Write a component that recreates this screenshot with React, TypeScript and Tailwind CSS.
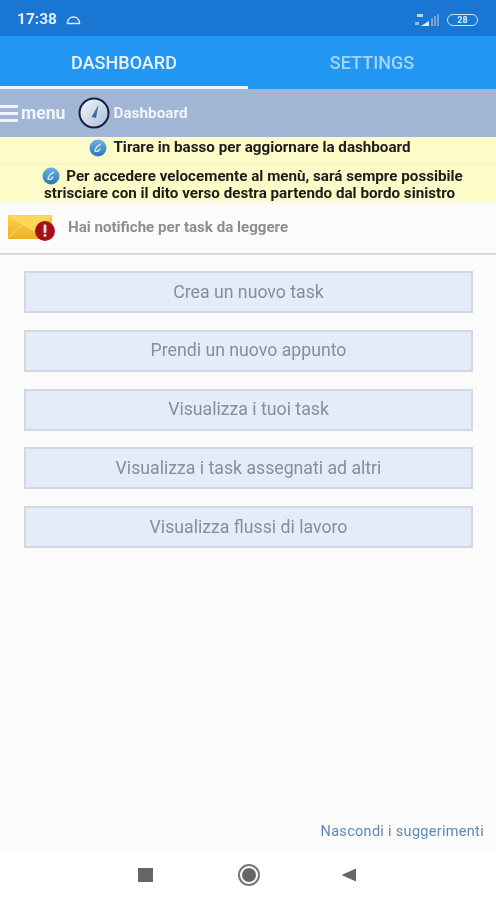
const font = { fontFamily: '"Roboto", "Liberation Sans", sans-serif' };

function InfoIcon() {
  return (
    <svg width="18" height="18" viewBox="0 0 18 18" className="shrink-0">
      <defs>
        <linearGradient id="ig" x1="0" y1="0" x2="0" y2="1">
          <stop offset="0" stopColor="#6fb2e6" />
          <stop offset="1" stopColor="#2a78b8" />
        </linearGradient>
      </defs>
      <circle cx="9" cy="9" r="8.5" fill="url(#ig)" />
      <path d="M11.5 5.5 C9 6.5 6.5 9 6 12 C8 13 10 11.5 11 10" fill="none" stroke="#cfe4f5" strokeWidth="1.4" strokeLinecap="round" />
    </svg>
  );
}

function Gauge() {
  return (
    <svg width="32" height="32" viewBox="0 0 32 32" className="shrink-0">
      <defs>
        <linearGradient id="gg" x1="0" y1="0" x2="1" y2="1">
          <stop offset="0" stopColor="#f7f8fb" />
          <stop offset="1" stopColor="#a9bdd9" />
        </linearGradient>
      </defs>
      <circle cx="16" cy="16" r="14.5" fill="url(#gg)" stroke="#141d44" strokeWidth="2" />
      <path d="M20.5 8 L18 21 L13.5 20 Z" fill="#3f6fa8" />
    </svg>
  );
}

function Mail() {
  return (
    <svg width="48" height="28" viewBox="0 0 48 28" className="shrink-0">
      <defs>
        <linearGradient id="ml" x1="0" y1="0" x2="0" y2="1">
          <stop offset="0" stopColor="#fbd24c" />
          <stop offset="1" stopColor="#eeb022" />
        </linearGradient>
      </defs>
      <rect x="0" y="1" width="44" height="24" rx="1" fill="url(#ml)" />
      <path d="M0 2 L25 17 L44 2 Z" fill="#fbd85c" />
      <path d="M1 23 L14 11" stroke="#fde28a" strokeWidth="1" />
      <circle cx="37" cy="17" r="10" fill="#a80f14" />
      <rect x="35.6" y="10.5" width="2.8" height="8.5" rx="1" fill="#f4e3e3" />
      <rect x="35.6" y="20" width="2.8" height="2.8" rx="1" fill="#f4e3e3" />
    </svg>
  );
}

const buttons = [
  "Crea un nuovo task",
  "Prendi un nuovo appunto",
  "Visualizza i tuoi task",
  "Visualizza i task assegnati ad altri",
  "Visualizza flussi di lavoro",
];

export default function App() {
  return (
    <div className="w-[496px] h-[900px] overflow-hidden bg-[#fafafa]">
      <div style={font} className="w-[496px] h-[900px] flex flex-col blur-[0.5px] bg-[#fbfbfb]">
        <div className="h-[36px] shrink-0 bg-[#1976d2] flex items-center justify-between pt-[4px] pl-[17px] pr-[18px] text-white">
          <div className="flex items-center gap-[9px]">
            <span className="text-[15.5px] font-bold text-[#e4f0fb]">17:38</span>
            <svg width="15" height="9" viewBox="0 0 15 9">
              <path d="M1.5 7.5 C1.5 3.5 4 1 7.5 1 C11 1 13.5 3.5 13.5 7.5 Z" fill="none" stroke="#dcebf9" strokeWidth="1.4" />
            </svg>
          </div>
          <div className="flex items-center gap-[7px]">
            <svg width="26" height="14" viewBox="0 0 26 14">
              <rect x="3" y="1" width="6" height="3" fill="#b9d4ee" />
              <rect x="1" y="9" width="4" height="3" fill="#8fbbe4" />
              <path d="M7 13 L15 13 L15 8 Z" fill="#e6f0fa" />
              <rect x="17" y="5" width="2" height="8" fill="#6ea4d8" />
              <rect x="20" y="3" width="2" height="10" fill="#6ea4d8" />
              <rect x="23" y="1" width="2" height="12" fill="#6ea4d8" />
            </svg>
            <div className="w-[31px] h-[12px] rounded-full border border-[#cfe2f5] flex items-center justify-center text-[9px] font-bold leading-none text-[#dcebf9]">
              28
            </div>
          </div>
        </div>

        <div className="h-[53px] shrink-0 bg-[#2196f3] flex">
          <div className="w-[248px] pt-[3px] border-b-[3px] border-[#e8f3fd] flex items-center justify-center text-[18px] font-medium text-[#e8f3fd]">
            DASHBOARD
          </div>
          <div className="flex-1 pt-[3px] pb-[3px] flex items-center justify-center text-[18px] font-medium text-[#a5d4f9]">
            SETTINGS
          </div>
        </div>

        <div className="h-[48px] shrink-0 bg-[#a1b5d5] flex items-center">
          <div className="w-[18px] flex flex-col gap-[4px]">
            <div className="h-[3px] bg-[#f2f5fa]" />
            <div className="h-[3px] bg-[#f2f5fa]" />
            <div className="h-[3px] bg-[#f2f5fa]" />
          </div>
          <span className="ml-[3px] text-[17.6px] font-bold text-[#f2f5fa]">menu</span>
          <div className="ml-[13px]"><Gauge /></div>
          <span className="ml-[3px] text-[15.3px] font-bold text-[#f2f5fa]">Dashboard</span>
        </div>

        <div className="h-[28px] shrink-0 bg-[#fdfbc8] flex items-center justify-center gap-[6px] pb-[5px] pl-[4px] border-b border-[#f2f0c4] text-[15.2px] font-bold leading-none text-[#1c1c1c]">
          <InfoIcon />
          <span>Tirare in basso per aggiornare la dashboard</span>
        </div>

        <div className="h-[37px] shrink-0 bg-[#fdfbc8] flex flex-col items-center justify-center pl-[3px] text-[15.2px] font-bold leading-[16px] text-[#1c1c1c]">
          <div className="flex items-center gap-[6px] pl-[6px]">
            <InfoIcon />
            <span>Per accedere velocemente al menù, sará sempre possibile</span>
          </div>
          <span>strisciare con il dito verso destra partendo dal bordo sinistro</span>
        </div>

        <div className="h-[53px] shrink-0 border-b-2 border-[#d8d8d8] flex items-center pl-[8px] gap-[12px]">
          <Mail />
          <span className="text-[15.1px] font-bold text-[#8e8e8e]">Hai notifiche per task da leggere</span>
        </div>

        <div className="flex-1 flex flex-col">
          <div className="flex flex-col gap-[16.75px] pt-[16px] pl-[24px] pr-[23px]">
            {buttons.map((b) => (
              <div key={b} className="h-[42px] bg-[#e3ecfa] border-2 border-[#d4d8de] flex items-center justify-center text-[17.7px] text-[#878e99]">
                {b}
              </div>
            ))}
          </div>
          <div className="mt-auto pr-[12px] pb-[7px] text-right text-[14.5px] tracking-[0.3px] text-[#5c88b8]">
            Nascondi i suggerimenti
          </div>
        </div>

        <div className="h-[50px] shrink-0 bg-white flex items-center pb-[1px]">
          <div className="ml-[138px] w-[15px] h-[14px] bg-[#666666]" />
          <div className="ml-[85px] w-[22px] h-[22px] rounded-full border-2 border-[#777777] flex items-center justify-center">
            <div className="w-[14px] h-[14px] rounded-full bg-[#666666]" />
          </div>
          <svg width="16" height="14" viewBox="0 0 16 14" className="ml-[81px]">
            <path d="M0.5 7 L15 0.5 L15 13.5 Z" fill="#666666" />
          </svg>
        </div>
      </div>
    </div>
  );
}
